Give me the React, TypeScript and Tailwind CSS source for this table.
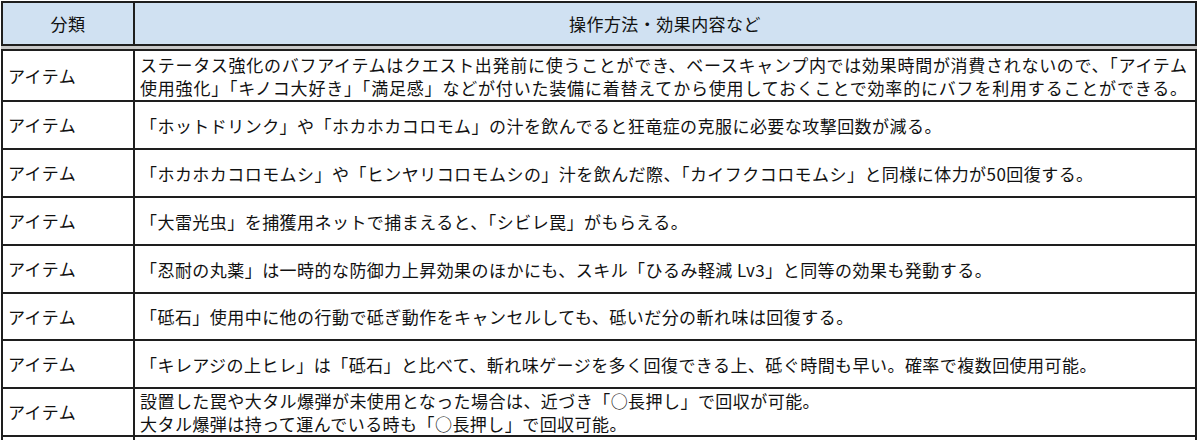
const rows: { kind: string; lines: string[]; h: string; justify?: boolean }[] = [
  {
    kind: "アイテム",
    lines: [
      "ステータス強化のバフアイテムはクエスト出発前に使うことができ、ベースキャンプ内では効果時間が消費されないので、「アイテム",
      "使用強化」「キノコ大好き」「満足感」などが付いた装備に着替えてから使用しておくことで効率的にバフを利用することができる。",
    ],
    h: "h-[51px]",
    justify: true,
  },
  {
    kind: "アイテム",
    lines: ["「ホットドリンク」や「ホカホカコロモム」の汁を飲んでると狂竜症の克服に必要な攻撃回数が減る。"],
    h: "h-[48px]",
  },
  {
    kind: "アイテム",
    lines: ["「ホカホカコロモムシ」や「ヒンヤリコロモムシの」汁を飲んだ際、「カイフクコロモムシ」と同様に体力が50回復する。"],
    h: "h-[48px]",
  },
  {
    kind: "アイテム",
    lines: ["「大雷光虫」を捕獲用ネットで捕まえると、「シビレ罠」がもらえる。"],
    h: "h-[48px]",
  },
  {
    kind: "アイテム",
    lines: ["「忍耐の丸薬」は一時的な防御力上昇効果のほかにも、スキル「ひるみ軽減 Lv3」と同等の効果も発動する。"],
    h: "h-[48px]",
  },
  {
    kind: "アイテム",
    lines: ["「砥石」使用中に他の行動で砥ぎ動作をキャンセルしても、砥いだ分の斬れ味は回復する。"],
    h: "h-[47px]",
  },
  {
    kind: "アイテム",
    lines: ["「キレアジの上ヒレ」は「砥石」と比べて、斬れ味ゲージを多く回復できる上、砥ぐ時間も早い。確率で複数回使用可能。"],
    h: "h-[48px]",
  },
  {
    kind: "アイテム",
    lines: [
      "設置した罠や大タル爆弾が未使用となった場合は、近づき「○長押し」で回収が可能。",
      "大タル爆弾は持って運んでいる時も「○長押し」で回収可能。",
    ],
    h: "h-[48px]",
  },
];

export default function App() {
  return (
    <div
      className="w-[1200px] h-[440px] overflow-hidden bg-white pt-[1px] pl-[1px] text-[17px] tracking-[0.45px] text-[#111]"
      style={{ fontFamily: '"Noto Sans CJK JP", "Noto Sans", sans-serif' }}
    >
      {/* header */}
      <div className="w-[1196px] h-[45px] flex border-2 border-[#1e1e1e] bg-[#d0e1f2]">
        <div className="w-[132px] border-r-2 border-[#1e1e1e] flex items-center justify-center">
          分類
        </div>
        <div className="flex-1 flex items-center justify-center">操作方法・効果内容など</div>
      </div>

      {/* frozen pane gap */}
      <div className="w-[1196px] h-[3px] bg-[#c8c8c8]" />

      {/* body */}
      <div className="w-[1196px] border-x-2 border-t-2 border-[#1e1e1e]">
        {rows.map((r, i) => (
          <div key={i} className={`flex border-b-2 border-[#1e1e1e] ${r.h}`}>
            <div className="w-[132px] border-r-2 border-[#1e1e1e] flex items-center pl-[5px]">
              {r.kind}
            </div>
            <div
              className={`flex-1 flex flex-col justify-center pl-[5px] leading-[23px] ${
                r.justify ? "pr-[8px] text-justify [text-align-last:justify]" : "whitespace-nowrap"
              }`}
            >
              {r.lines.map((l, j) => (
                <div key={j} className={r.justify ? "whitespace-nowrap text-justify [text-align-last:justify] tracking-normal" : ""}>
                  {l}
                </div>
              ))}
            </div>
          </div>
        ))}
        <div className="flex h-[20px]">
          <div className="w-[132px] border-r-2 border-[#1e1e1e]" />
          <div className="flex-1" />
        </div>
      </div>
    </div>
  );
}
